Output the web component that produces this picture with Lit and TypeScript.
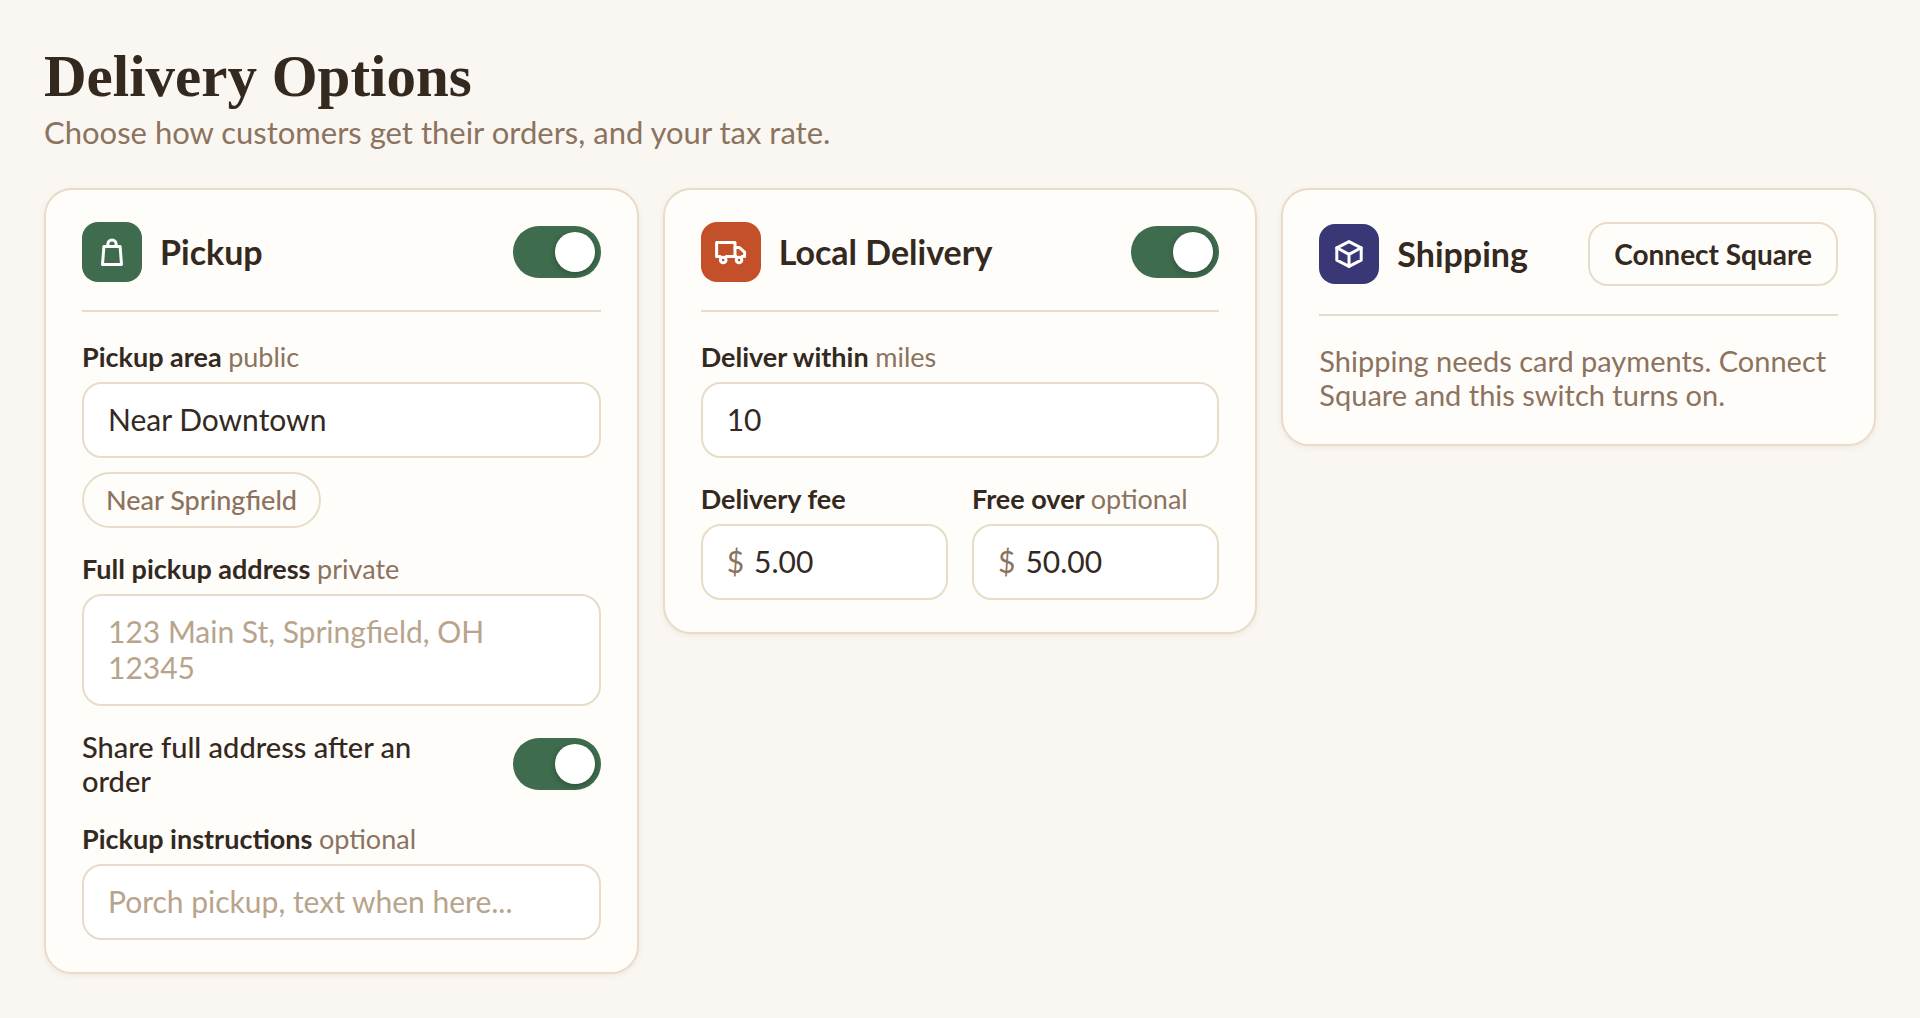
import { LitElement, html, css, svg, nothing } from "lit";
import { customElement, property, state } from "lit/decorators.js";

const icons = {
  bag: svg`
    <path d="M7.9 10.4H24.1L25.5 28.4H6.5Z" />
    <path d="M11.9 10.4V8a4.1 4.1 0 0 1 8.2 0v2.4" />`,
  truck: svg`
    <path d="M5 20.6H1.6V6.4H20V20.6H11.4" />
    <path d="M20 11.6h4.4l5.2 4.6v4.4h-2.2M20 20.6h1" />
    <circle cx="8.2" cy="24" r="2.8" />
    <circle cx="24" cy="24" r="2.8" />
    <path d="M5 20.6l1 1.4M11.4 20.6l-1 1.4M27.2 20.6l-1 1.4M21 20.6l1 1.4" />`,
  box: svg`
    <path d="M16 3.6L28.2 9.8V22.2L16 28.4L3.8 22.2V9.8Z" />
    <path d="M3.8 9.8L16 16.4L28.2 9.8M16 16.4V28.4" />`,
};

const fieldLabel = css`
  .label {
    display: block;
    margin-bottom: 8px;
    font-size: 27px;
    line-height: 34px;
    font-weight: 700;
  }
  .hint {
    font-weight: 400;
    color: var(--muted);
  }
`;

@customElement("toggle-switch")
export class ToggleSwitch extends LitElement {
  @property() label = "";
  @property({ type: Boolean }) checked = false;

  static styles = css`
    :host {
      display: block;
      flex: none;
    }
    .switch {
      appearance: none;
      display: flex;
      align-items: center;
      box-sizing: border-box;
      width: 88px;
      height: 52px;
      margin: 0;
      padding: 6px;
      border-radius: 26px;
      background: #d8ccba;
      cursor: pointer;
    }
    .switch::before {
      content: "";
      width: 40px;
      height: 40px;
      border-radius: 50%;
      background: #fff;
      box-shadow: 0 2px 6px rgba(0, 0, 0, 0.25);
    }
    .switch:checked {
      justify-content: flex-end;
      background: #3f6b4e;
    }
  `;

  render() {
    return html`<input
      class="switch"
      type="checkbox"
      role="switch"
      aria-label=${this.label}
      .checked=${this.checked}
      @change=${(e: Event) => (this.checked = (e.target as HTMLInputElement).checked)}
    />`;
  }
}

@customElement("text-field")
export class TextField extends LitElement {
  @property() label = "";
  @property() hint = "";
  @property() value = "";
  @property() placeholder = "";
  @property() prefixText = "";
  @property({ type: Number }) rows = 1;

  static styles = [
    fieldLabel,
    css`
      :host {
        display: block;
        min-width: 0;
      }
      .box {
        display: flex;
        gap: 10px;
        box-sizing: border-box;
        padding: 17px 24px 19px;
        border: 2px solid var(--line);
        border-radius: 20px;
        background: #fff;
        font-size: 30px;
        line-height: 36px;
      }
      .prefix {
        color: var(--muted);
      }
      .control {
        display: block;
        flex: 1;
        min-width: 0;
        height: 36px;
        margin: 0;
        padding: 0;
        border: 0;
        outline: 0;
        background: none;
        color: inherit;
        font: inherit;
        resize: none;
        overflow: hidden;
      }
      textarea.control {
        height: auto;
      }
      .control::placeholder {
        color: #b8a48c;
        opacity: 1;
      }
    `,
  ];

  render() {
    return html`
      <label class="label" for="control"
        >${this.label}${this.hint ? html` <span class="hint">${this.hint}</span>` : nothing}</label
      >
      <div class="box">
        ${this.prefixText ? html`<span class="prefix">${this.prefixText}</span>` : nothing}
        ${this.rows > 1
          ? html`<textarea
              class="control"
              id="control"
              rows=${this.rows}
              placeholder=${this.placeholder}
              .value=${this.value}
            ></textarea>`
          : html`<input
              class="control"
              id="control"
              type="text"
              placeholder=${this.placeholder}
              .value=${this.value}
            />`}
      </div>
    `;
  }
}

@customElement("option-card")
export class OptionCard extends LitElement {
  @property() heading = "";
  @property() icon: keyof typeof icons = "bag";

  static styles = css`
    :host {
      display: block;
      box-sizing: border-box;
      min-width: 0;
      padding: 32px 36px;
      border: 2px solid var(--line);
      border-radius: 28px;
      background: #fffdf9;
      box-shadow: 0 2px 6px rgba(90, 60, 30, 0.08);
    }
    .head {
      display: flex;
      align-items: center;
      gap: 18px;
      padding-bottom: 28px;
      margin-bottom: 28px;
      border-bottom: 2px solid var(--line);
    }
    .tile {
      display: flex;
      align-items: center;
      justify-content: center;
      flex: none;
      width: 60px;
      height: 60px;
      border-radius: 16px;
    }
    .bag {
      background: #3f6b4e;
    }
    .truck {
      background: #c4502a;
    }
    .box {
      background: #3a3777;
    }
    .glyph {
      width: 32px;
      height: 32px;
      fill: none;
      stroke: #fff;
      stroke-width: 3;
      stroke-linecap: round;
      stroke-linejoin: round;
    }
    .heading {
      flex: 1;
      margin: 0;
      font-size: 34px;
      line-height: 40px;
      font-weight: 700;
    }
  `;

  render() {
    return html`
      <div class="head">
        <div class="tile ${this.icon}">
          <svg class="glyph" viewBox="0 0 32 32" aria-hidden="true">${icons[this.icon]}</svg>
        </div>
        <h2 class="heading">${this.heading}</h2>
        <slot name="action"></slot>
      </div>
      <slot></slot>
    `;
  }
}

@customElement("app-root")
export class AppRoot extends LitElement {
  @state() private area = "Near Downtown";

  static styles = css`
    :host {
      --ink: #33291f;
      --muted: #8b7360;
      --line: #e8dcc8;
      display: block;
      box-sizing: border-box;
      min-height: 100vh;
      padding: 44px;
      background: #faf7f2;
      color: var(--ink);
      font-family: Lato, "Open Sans", sans-serif;
    }
    .title {
      margin: 0;
      font-family: "Liberation Serif", serif;
      font-size: 59px;
      line-height: 64px;
      font-weight: 700;
    }
    .lead {
      margin: 6px 0 38px;
      font-size: 31px;
      line-height: 36px;
      color: var(--muted);
    }
    .cards {
      display: grid;
      grid-template-columns: repeat(3, minmax(0, 1fr));
      align-items: start;
      gap: 24px;
    }
    .fields {
      display: flex;
      flex-direction: column;
      gap: 24px;
    }
    .with-chip {
      display: flex;
      flex-direction: column;
      gap: 14px;
    }
    .chip {
      align-self: flex-start;
      height: 56px;
      padding: 0 22px;
      border: 2px solid var(--line);
      border-radius: 28px;
      background: none;
      color: var(--muted);
      font: 500 27px/34px Lato, "Open Sans", sans-serif;
      cursor: pointer;
    }
    .share {
      display: flex;
      align-items: center;
      justify-content: space-between;
      gap: 40px;
      font-size: 29px;
      line-height: 34px;
      font-weight: 500;
    }
    .pair {
      display: grid;
      grid-template-columns: repeat(2, minmax(0, 1fr));
      gap: 24px;
    }
    .connect {
      height: 64px;
      padding: 0 24px;
      border: 2px solid var(--line);
      border-radius: 20px;
      background: none;
      color: var(--ink);
      font: 700 28px/34px Lato, "Open Sans", sans-serif;
      cursor: pointer;
    }
    .note {
      margin: 0;
      font-size: 29px;
      line-height: 34px;
      color: var(--muted);
    }
  `;

  render() {
    return html`
      <main>
        <h1 class="title">Delivery Options</h1>
        <p class="lead">Choose how customers get their orders, and your tax rate.</p>
        <div class="cards">
          <option-card heading="Pickup" icon="bag">
            <toggle-switch slot="action" label="Pickup" checked></toggle-switch>
            <div class="fields">
              <div class="with-chip">
                <text-field label="Pickup area" hint="public" .value=${this.area}></text-field>
                <button class="chip" type="button" @click=${() => (this.area = "Near Springfield")}>
                  Near Springfield
                </button>
              </div>
              <text-field
                label="Full pickup address"
                hint="private"
                rows="2"
                .placeholder=${"123 Main St, Springfield, OH\n12345"}
              ></text-field>
              <div class="share">
                <span>Share full address after an order</span>
                <toggle-switch label="Share full address after an order" checked></toggle-switch>
              </div>
              <text-field
                label="Pickup instructions"
                hint="optional"
                placeholder="Porch pickup, text when here..."
              ></text-field>
            </div>
          </option-card>

          <option-card heading="Local Delivery" icon="truck">
            <toggle-switch slot="action" label="Local Delivery" checked></toggle-switch>
            <div class="fields">
              <text-field label="Deliver within" hint="miles" value="10"></text-field>
              <div class="pair">
                <text-field label="Delivery fee" .prefixText=${"$"} value="5.00"></text-field>
                <text-field
                  label="Free over"
                  hint="optional"
                  .prefixText=${"$"}
                  value="50.00"
                ></text-field>
              </div>
            </div>
          </option-card>

          <option-card heading="Shipping" icon="box">
            <button slot="action" class="connect" type="button">Connect Square</button>
            <p class="note">Shipping needs card payments. Connect Square and this switch turns on.</p>
          </option-card>
        </div>
      </main>
    `;
  }
}
